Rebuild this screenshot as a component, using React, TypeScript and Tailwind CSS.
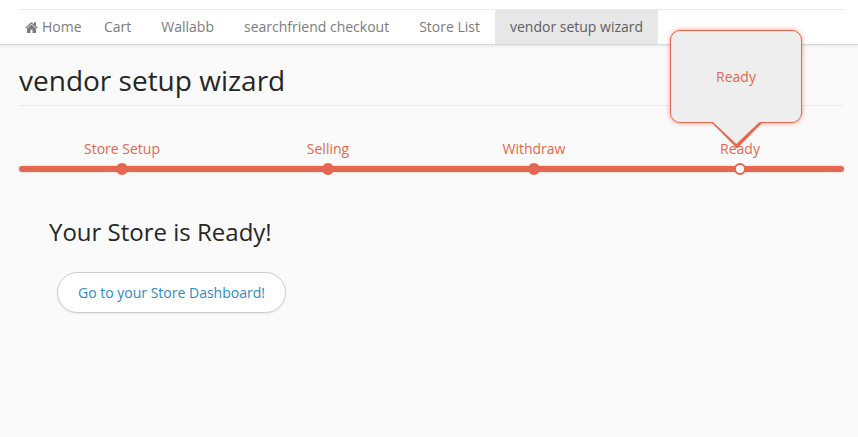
const links = ['Wallabb', 'searchfriend checkout', 'Store List'];
const steps = ['Store Setup', 'Selling', 'Withdraw', 'Ready'];

function Nav() {
  return (
    <nav className="h-[45px] border-b border-[#d9d9d9] bg-white pr-3.5 pl-[19px] pt-[9px] text-[#7c7c7c] shadow-[0_1px_3px_rgba(0,0,0,0.09)]">
      <div className="flex h-[35px] border-t border-[#ebebeb] leading-[34px] whitespace-nowrap">
        <a className="flex w-[70px] items-center pl-1.5">
          <svg className="mr-1 h-[11px] w-[13px] shrink-0" viewBox="0 0 1664 1312" fill="currentColor" preserveAspectRatio="none">
            <path d="M1408 768v480q0 26-19 45t-45 19H960V928H704v384H320q-26 0-45-19t-19-45V768q0-1 .5-3t.5-3l575-474 575 474q1 2 1 6zm223-69l-62 74q-8 9-21 11h-3q-13 0-21-7L832 200 140 777q-12 8-24 7-13-2-21-11l-62-74q-8-10-7-23.500t11-21.500L756 55q32-26 76-26t76 26l244 204V64q0-14 9-23t23-9h192q14 0 23 9t9 23v408l219 182q10 8 11 21.500t-7 23.500z" />
          </svg>
          Home
        </a>
        <a className="px-[15px]">Cart</a>
        {links.map((link) => (
          <a key={link} className="px-[15px]">{link}</a>
        ))}
        <a className="bg-[#e7e7e7] px-[15px] text-[#606060]">vendor setup wizard</a>
      </div>
    </nav>
  );
}

function Callout() {
  return (
    <div className="absolute bottom-[53px] left-[33px] flex h-[93px] w-[132px] items-center justify-center rounded-[10px] border border-[#e5674f] bg-[#eee] shadow-[0_0_5px_rgba(229,103,79,0.65)]">
      Ready
      <svg className="absolute top-[91px] left-[40px] h-[28px] w-[52px]" viewBox="0 0 52 28">
        <path d="M1 1L26 26.500 51 1Z" fill="#e5674f" />
        <path d="M2 0L25.300 22 48.500 0Z" fill="#eee" />
      </svg>
    </div>
  );
}

function Progress() {
  return (
    <div className="relative mt-[33px] flex h-[37px] text-[#e5674f]">
      <div className="absolute top-[27px] h-1.5 w-full rounded-[3px] bg-[#e5674f] shadow-[0_0_3px_rgba(229,103,79,0.3)]" />
      {steps.map((step, index) => (
        <div key={step} className="relative flex w-[206px] shrink-0 flex-col items-center leading-5">
          {index === 3 && <Callout />}
          <span className="relative">{step}</span>
          <span className={`relative mt-1 h-3 w-3 rounded-full border-2 border-[#e5674f] ${index === 3 ? 'bg-white' : 'bg-[#e5674f]'}`} />
        </div>
      ))}
    </div>
  );
}

export default function App() {
  return (
    <div className="min-h-screen overflow-hidden bg-[#fafafa] font-['Open_Sans',sans-serif] text-sm">
      <Nav />
      <main className="pr-3.5 pl-[19px]">
        <h1 className="h-[61px] border-b border-[#ebebeb] pt-[15px] text-[28px] leading-10 text-[#262626]">vendor setup wizard</h1>
        <Progress />
        <section className="pt-[40px] pl-[30px]">
          <h2 className="text-2xl leading-8 text-[#262626]">Your Store is Ready!</h2>
          <a className="mt-[24px] ml-2 inline-flex h-[41px] w-[229px] items-center justify-center rounded-full border border-[#ccc] bg-white whitespace-nowrap text-[#2d8bc4] shadow-[0_1px_2px_rgba(0,0,0,0.07)]">
            Go to your Store Dashboard!
          </a>
        </section>
      </main>
    </div>
  );
}
